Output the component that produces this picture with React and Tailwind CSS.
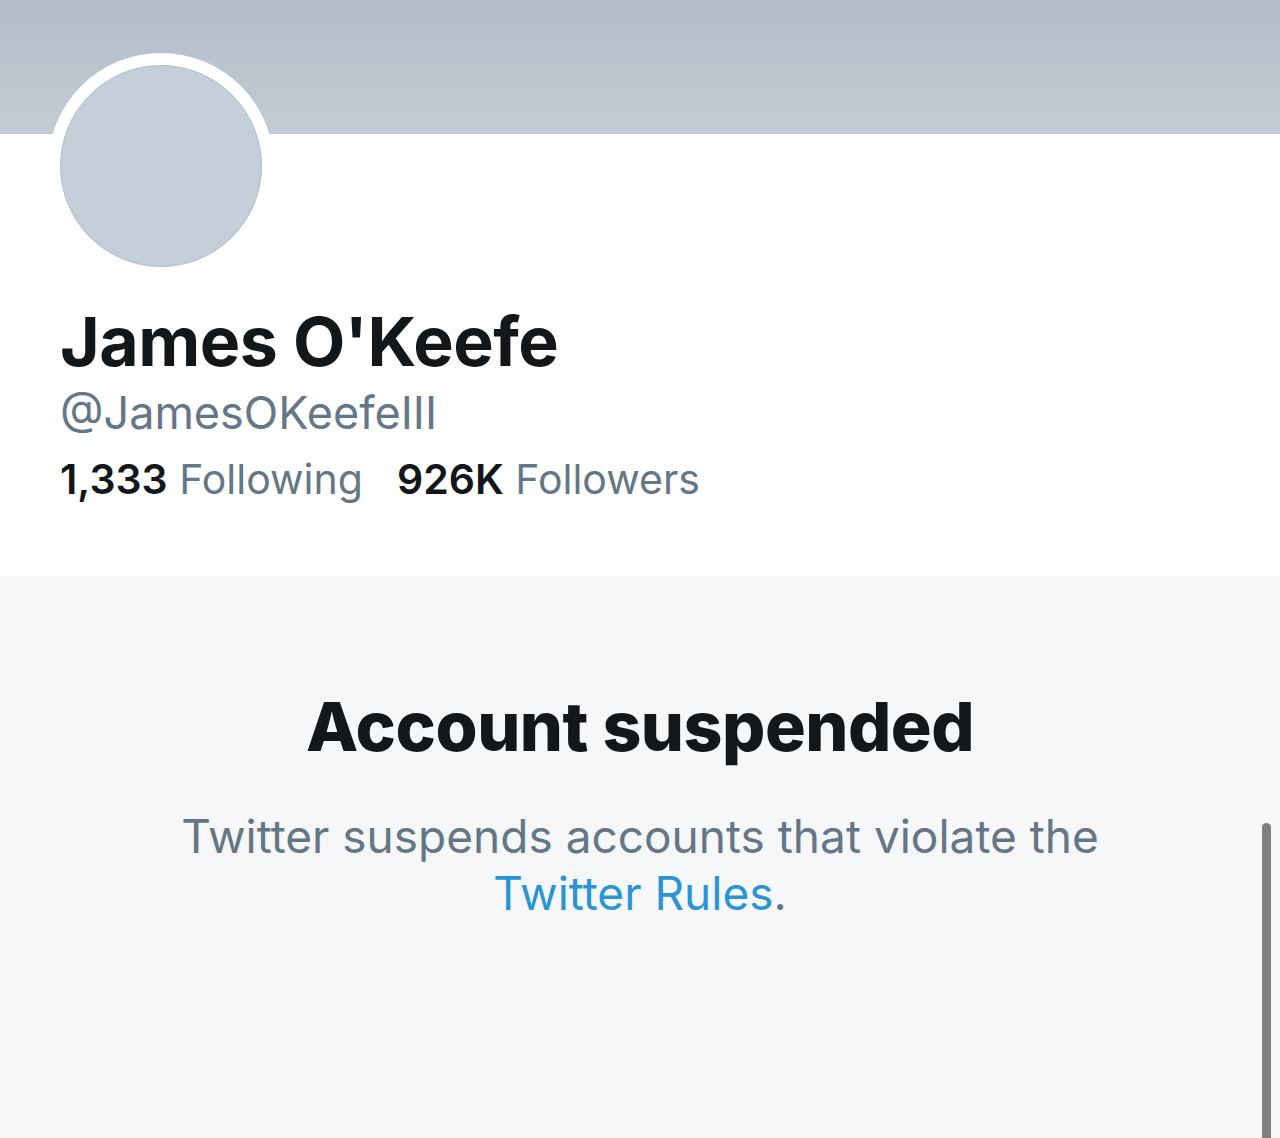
export default function App() {
  return (
    <div
      className="relative flex h-[1138px] w-full flex-col overflow-hidden bg-white"
      style={{ fontFamily: 'Inter, "Liberation Sans", sans-serif' }}
    >
      {/* Header-Banner */}
      <div className="h-[134px] w-full shrink-0 bg-gradient-to-b from-[#b4bdc7] to-[#c3ccd5]" />

      {/* Profil */}
      <div className="flex h-[442px] shrink-0 flex-col bg-white">
        <div className="-mt-[81px] ml-[48px] h-[226px] w-[226px] rounded-full bg-white p-[12px]">
          <div className="h-full w-full rounded-full border border-[#b3bdc7] bg-[#c4cfd9]" />
        </div>

        <h1 className="mt-[26px] pl-[60px] text-[68px] font-bold leading-[72px] tracking-[-0.5px] text-[#14171a]">
          James O'Keefe
        </h1>
        <div className="mt-[6px] pl-[60px] text-[45px] leading-[60px] text-[#657786]">@JamesOKeefeIII</div>
        <div className="mt-[8px] flex gap-[34px] pl-[60px] text-[41px] leading-[56px]">
          <span>
            <span className="font-semibold text-[#14171a]">1,333</span>{' '}
            <span className="text-[#657786]">Following</span>
          </span>
          <span>
            <span className="font-semibold text-[#14171a]">926K</span>{' '}
            <span className="text-[#657786]">Followers</span>
          </span>
        </div>
      </div>

      {/* Gesperrt-Hinweis */}
      <div className="flex flex-1 flex-col items-center bg-[#f5f7f9] pt-[112px] text-center">
        <h2 className="text-[68px] font-extrabold leading-[76px] tracking-[-0.5px] text-[#14171a]">Account suspended</h2>
        <p className="mt-[44px] w-[980px] text-[46px] leading-[57px] text-[#657786]">
          Twitter suspends accounts that violate the{' '}
          <span className="text-[#2a95d2]">Twitter Rules</span>.
        </p>
      </div>

      {/* Scroll-Indikator */}
      <div className="absolute bottom-0 left-[1262px] top-[823px] w-[9px] rounded-t-full bg-[#808080]" />
    </div>
  );
}
